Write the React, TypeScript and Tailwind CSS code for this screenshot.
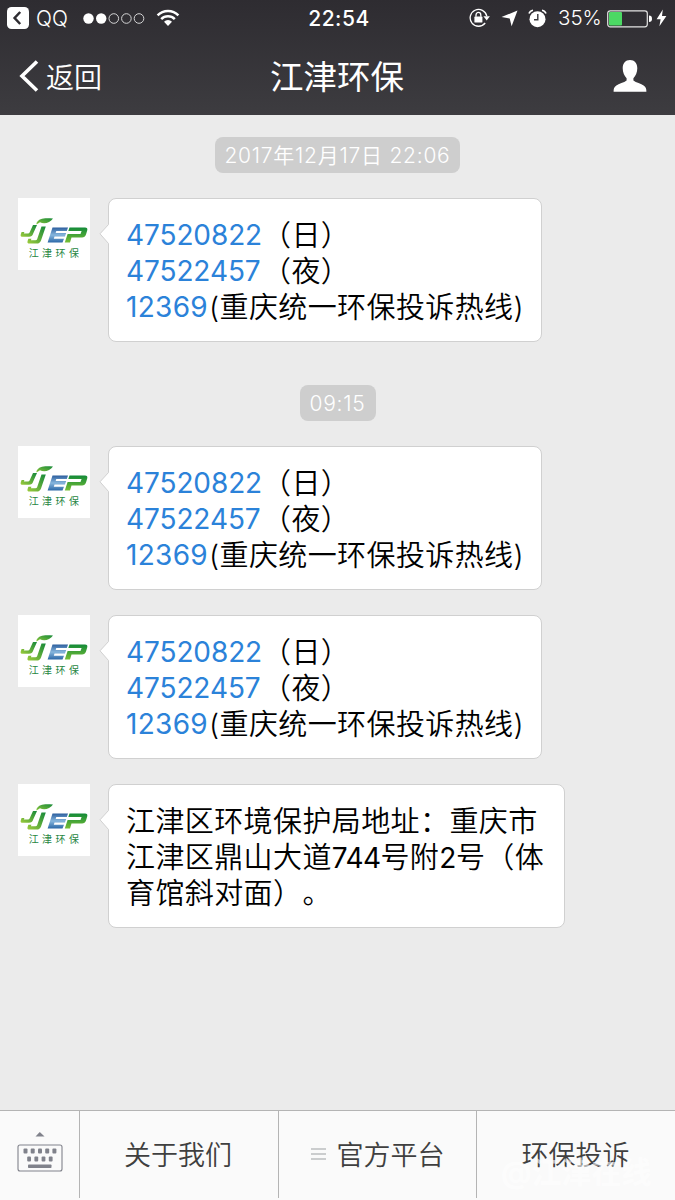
import type { ReactNode } from 'react';

type Message =
  | { kind: 'time'; id: number; text: string; className: string }
  | { kind: 'hotline'; id: number; className: string }
  | { kind: 'address'; id: number; className: string };

const messages: Message[] = [
  { kind: 'time', id: 1, text: '2017年12月17日 22:06', className: 'mt-[22px] w-[245px]' },
  { kind: 'hotline', id: 2, className: 'mt-[25px]' },
  { kind: 'time', id: 3, text: '09:15', className: 'mt-[43px] w-[76px]' },
  { kind: 'hotline', id: 4, className: 'mt-[25px]' },
  { kind: 'hotline', id: 5, className: 'mt-[25px]' },
  { kind: 'address', id: 6, className: 'mt-[25px]' },
];

const StatusBar = () => (
  <div className="flex h-[37px] items-center text-white">
    <div className="flex flex-1 items-center pl-[7px]">
      <svg className="-mt-px" width="22" height="22" viewBox="0 0 22 22">
        <rect width="22" height="22" rx="4.5" fill="#fff" />
        <path d="M13.2 5 L7.6 11 L13.2 17" fill="none" stroke="#2f2d32" strokeWidth="2.5" />
      </svg>
      <span className="ml-[7px] w-[47px] text-[21px] font-light leading-none">QQ</span>
      <svg width="62" height="12" viewBox="0 0 62 12">
        <circle cx="5.5" cy="5.5" r="5.2" fill="#fff" />
        <circle cx="18.2" cy="5.5" r="5.2" fill="#fff" />
        <g fill="none" stroke="#d5d5d6" strokeWidth="1">
          <circle cx="30.8" cy="5.5" r="4.8" />
          <circle cx="43.4" cy="5.5" r="4.8" />
          <circle cx="56" cy="5.5" r="4.8" />
        </g>
      </svg>
      <svg className="-mt-px ml-[11px]" width="24" height="18" viewBox="0 0 24 18">
        <g fill="none" stroke="#fff" strokeWidth="2.5">
          <path d="M1.6 6.4 A14.5 14.5 0 0 1 22.4 6.4" />
          <path d="M5.2 10.1 A9.5 9.5 0 0 1 18.8 10.1" />
        </g>
        <path d="M8 12.8 A5.6 5.6 0 0 1 16 12.8 L12 17 Z" fill="#fff" />
      </svg>
    </div>
    <span className="w-[66px] pl-[4px] text-center text-[21px] font-medium leading-none tracking-[0.5px]">22:54</span>
    <div className="flex flex-1 items-center justify-end pr-[8px]">
      <svg className="-mt-px" width="22" height="20" viewBox="0 0 22 20">
        <path d="M16.2 15 A8.4 8.4 0 1 1 17.8 8.2" fill="none" stroke="#fff" strokeWidth="1.3" />
        <path d="M14.4 8.2 h6.5 l-3.2 4.2 z" fill="#fff" />
        <rect x="5.4" y="8.6" width="8" height="6" rx=".6" fill="#fff" />
        <path d="M7 8.8 V7 a2.4 2.6 0 0 1 4.8 0 V8.8" fill="none" stroke="#fff" strokeWidth="1.3" />
      </svg>
      <svg className="ml-[10px]" width="17" height="17" viewBox="0 0 17 17">
        <path d="M16.5 .4 L10.6 16.2 L8.7 8.4 L.5 7.1 Z" fill="#fff" />
      </svg>
      <svg className="-mt-px ml-[10px]" width="19" height="19" viewBox="0 0 19 19">
        <circle cx="9.5" cy="10.2" r="8" fill="#fff" />
        <path d="M1 4.6 A5 5 0 0 1 5 1.2 M18 4.6 A5 5 0 0 0 14 1.2" fill="none" stroke="#fff" strokeWidth="1.6" />
        <path d="M9.8 5 V10.8 H6" fill="none" stroke="#39383c" strokeWidth="1.4" />
      </svg>
      <span className="ml-[11px] w-[49px] text-[20.5px] font-light leading-none">35%</span>
      <svg width="45" height="18" viewBox="0 0 45 18">
        <rect x=".7" y=".8" width="39.6" height="16" rx="2.5" fill="none" stroke="#e4e4e4" strokeWidth="1.2" />
        <rect x="2" y="2" width="13" height="13.5" rx="1" fill="#4cd964" />
        <path d="M42 5.5 a3 3.3 0 0 1 0 6.6 z" fill="#fff" />
      </svg>
      <svg className="-mt-px ml-[4px]" width="11" height="18" viewBox="0 0 11 18">
        <path d="M6.8 .5 L.6 10.2 H4.6 L3.4 17.3 L10.4 6.9 H6 Z" fill="#fff" />
      </svg>
    </div>
  </div>
);

const NavBar = () => (
  <div className="flex h-[78px] items-center text-white">
    <div className="flex flex-1 items-center pl-[19px]">
      <svg width="20" height="32" viewBox="0 0 20 32">
        <path d="M18 1.5 L3 16 L18 30.5" fill="none" stroke="#fff" strokeWidth="3.6" />
      </svg>
      <span className="ml-[7px] mt-[3px] text-[28px] font-[350] leading-none">返回</span>
    </div>
    <h1 className="ml-[8px] mt-[3px] text-[33.5px] leading-none">江津环保</h1>
    <div className="flex flex-1 justify-end pr-[28px]">
      <svg width="34" height="34" viewBox="0 0 34 34">
        <path
          d="M17 1 C21.5 1 24.3 4.2 24.3 9.3 C24.3 13.6 22.6 17.2 20.4 19.2 V21.6 C23 23.8 28 24.6 31 26.8 C33 28.2 33.4 30 33.4 32.8 H.6 C.6 30 1 28.2 3 26.8 C6 24.6 11 23.8 13.6 21.6 V19.2 C11.4 17.2 9.7 13.6 9.7 9.3 C9.7 4.2 12.5 1 17 1 Z"
          fill="#fff"
        />
      </svg>
    </div>
  </div>
);

const Avatar = () => (
  <div className="flex h-[72px] w-[72px] shrink-0 flex-col items-center bg-white pt-[19px]">
    <svg width="70" height="28" viewBox="0 0 70 28">
      <defs>
        <linearGradient id="leaf" x1="0" y1="1" x2="1" y2="0">
          <stop offset="0" stopColor="#8cc63a" />
          <stop offset="1" stopColor="#16893a" />
        </linearGradient>
        <linearGradient id="water" x1="0" y1="0" x2="0" y2="1">
          <stop offset="0" stopColor="#2b5d9d" />
          <stop offset=".5" stopColor="#86b6dd" />
          <stop offset="1" stopColor="#2a66a6" />
        </linearGradient>
        <linearGradient id="grass" x1="0" y1="0" x2="0" y2="1">
          <stop offset="0" stopColor="#128a38" />
          <stop offset="1" stopColor="#79bf36" />
        </linearGradient>
        <linearGradient id="stem" x1="0" y1="1" x2="1" y2="0">
          <stop offset="0" stopColor="#9ccb3b" />
          <stop offset="1" stopColor="#16893a" />
        </linearGradient>
      </defs>
      <path d="M17.5 6 C20 0.5 27 1 34 1.5 C31 6 25 7.5 21 5.2 L17.5 7.4 Z" fill="url(#leaf)" />
      <path d="M14 8 H18 L14.2 16.6 Q13.2 19.8 10 19.8 H3.8 Q1 19.8 1.8 17.2 L2.6 15 H5.4 L4.8 16.4 H9 Q10.2 16.4 10.7 15.2 Z" fill="url(#stem)" />
      <path d="M22.5 9.5 H26.8 L22 23.5 Q21 26.6 17.6 26.6 H10.6 Q7.8 26.6 8.6 24 L9.4 21.8 H12.4 L11.9 23.2 H16.4 Q17.8 23.2 18.2 22 Z" fill="url(#stem)" />
      <path d="M33.5 10.5 H49 L47.8 14 H37.3 L36.7 16 H47.2 L45.9 19.4 H35.5 L34.8 21.8 H45 L43.5 25.6 H28.6 Z" fill="url(#water)" />
      <path
        d="M50.5 10.5 H66 Q69 10.5 68.2 13.5 L67 17.5 Q66 20.5 63 20.5 H52.5 L51 25.6 H45.8 L48.6 17 H61.5 L62.6 14 H49.3 Z"
        fill="url(#grass)"
      />
    </svg>
    <span className="mt-[2px] pl-[3px] text-[10px] leading-[12px] tracking-[3.4px] text-[#27863f]">江津环保</span>
  </div>
);

const Bubble = ({ children, className }: { children: ReactNode; className: string }) => (
  <div className={`relative ml-[18px] h-[144px] rounded-[8px] border border-[#d0d0d0] bg-white pl-[17px] pt-[19px] text-black ${className}`}>
    {/* Tail pointing to the avatar */}
    <svg className="absolute -left-[10px] top-[25px]" width="11" height="20" viewBox="0 0 11 20">
      <path d="M11 .5 L9.5 .5 L1 9.8 L9.5 19.5 H11 Z" fill="#fff" />
      <path d="M9.5 .5 L1 9.8 L9.5 19.5" fill="none" stroke="#d0d0d0" />
    </svg>
    {children}
  </div>
);

const Line = ({ children }: { children: ReactNode }) => (
  <p className="flex h-[36px] items-baseline whitespace-nowrap text-[29px] font-[350] leading-[36px] tracking-[0.4px] [text-spacing-trim:space-all]">
    {children}
  </p>
);

const Phone = ({ children, className }: { children: string; className: string }) => (
  <a className={`relative -top-px text-[28px] font-normal text-[#2b82d9] ${className}`}>{children}</a>
);

const Hotline = () => (
  <Bubble className="w-[434px]">
    <Line>
      <Phone className="w-[136px] tracking-[-0.1px]">47520822</Phone>
      （日）
    </Line>
    <Line>
      <Phone className="w-[136px] tracking-[-0.1px]">47522457</Phone>
      （夜）
    </Line>
    <Line>
      <Phone className="w-[83px] tracking-[0.3px]">12369</Phone>
      (重庆统一环保投诉热线)
    </Line>
  </Bubble>
);

const Address = () => (
  <Bubble className="w-[457px]">
    <Line>江津区环境保护局地址：重庆市</Line>
    <Line>
      江津区鼎山大道<span className="text-[28px] font-normal tracking-[-0.6px]">744</span>号附
      <span className="text-[28px] font-normal tracking-[-0.4px]">2</span>号（体
    </Line>
    <Line>育馆斜对面）。</Line>
  </Bubble>
);

const KeyboardIcon = () => (
  <svg width="46" height="42" viewBox="0 0 46 42">
    <path d="M18.5 5.5 L22.8 1 L27.5 5.5 Z" fill="#80828b" />
    <rect x="1" y="14" width="44" height="26" rx="2" fill="none" stroke="#80828b" strokeWidth="1.1" />
    <g fill="#80828b">
      {[6.5, 13.7, 21, 28.2, 35.4].map((x) => (
        <rect key={x} x={x} y="17.5" width="4" height="5" rx="1" />
      ))}
      {[10.2, 17.4, 24.6, 31.8].map((x) => (
        <rect key={x} x={x} y="25.5" width="3.8" height="5" rx="1" />
      ))}
      <rect x="11" y="33.5" width="23.5" height="3.6" rx=".8" />
    </g>
  </svg>
);

const App = () => {
  return (
    <div className="relative flex h-[1200px] w-[675px] flex-col overflow-hidden bg-[#ebebeb] font-['Inter','Noto_Sans_CJK_SC',sans-serif]">
      <header className="h-[115px] bg-linear-to-b from-[#2e2c31] to-[#3d3c40]">
        <StatusBar />
        <NavBar />
      </header>

      <main className="flex flex-1 flex-col">
        {messages.map((message) => {
          if (message.kind === 'time') {
            return (
              <div
                key={message.id}
                className={`flex h-[36px] items-center justify-center self-center whitespace-pre rounded-[8px] bg-[#cecece] text-[21px] font-[350] leading-none tracking-[0.75px] text-white ${message.className}`}
              >
                {message.text}
              </div>
            );
          }
          return (
            <div key={message.id} className={`flex items-start pl-[18px] ${message.className}`}>
              <Avatar />
              {message.kind === 'hotline' ? <Hotline /> : <Address />}
            </div>
          );
        })}
      </main>

      {/* Official account menu */}
      <footer className="flex h-[90px] border-t border-[#b4b4b4] bg-[#fafafa] pb-[2px] text-[27px] font-[350] leading-none text-[#3f3f3f]">
        <button className="flex w-[80px] justify-center border-r border-[#b4b4b4] pt-[20px]">
          <KeyboardIcon />
        </button>
        <button className="flex w-[199px] items-center justify-center border-r border-[#b4b4b4] pr-[2px] pt-px">关于我们</button>
        <button className="flex w-[198px] items-center justify-center gap-[11px] border-r border-[#b4b4b4] pt-px">
          <svg className="-mt-[2px]" width="15" height="12" viewBox="0 0 15 12">
            <path d="M0 1 H15 M0 6 H15 M0 11 H15" stroke="#bcbfc0" strokeWidth="1.4" />
          </svg>
          官方平台
        </button>
        <button className="flex flex-1 items-center justify-center pr-px pt-px">环保投诉</button>
      </footer>

      <span className="absolute left-[501px] top-[1155px] whitespace-nowrap text-[30px] font-bold leading-[34px] text-white/60">@江津在线</span>
    </div>
  );
};

export default App;
